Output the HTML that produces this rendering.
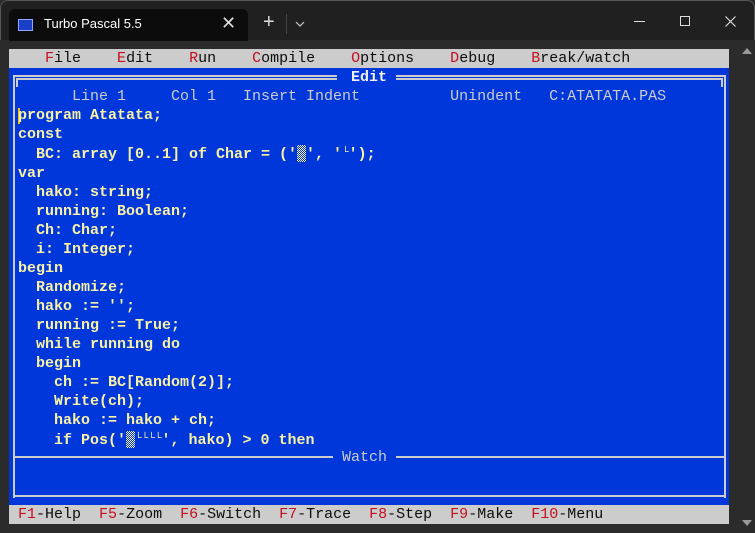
<!DOCTYPE html>
<html><head><meta charset="utf-8"><style>
*{margin:0;padding:0;box-sizing:border-box}
body{width:755px;height:533px;background:#2b2b2b;overflow:hidden;position:relative;font-family:"Liberation Mono","DejaVu Sans Mono",monospace}
.abs{position:absolute}
.row{position:absolute;left:9px;height:19px;line-height:19px;font-size:15px;white-space:pre;font-weight:bold}
.r{color:#c50f1f}
.y{color:#f9f1a5}
.hl{background:#cccccc;position:absolute}
.blk{display:inline-block;width:9px;height:17px;vertical-align:-4px;background:repeating-conic-gradient(#f9f1a5 0 25%,#0037da 0 50%) 0 0/2px 2px}
.sm{font-size:11px;vertical-align:3px}
</style></head><body>
<div class="abs" style="left:0;top:0;width:755px;height:40px;background:#202020;border-radius:8px 8px 0 0;border:1px solid #555;border-bottom:none"></div>
<div class="abs" style="left:9px;top:9px;width:239px;height:32px;background:#0c0c0c;border-radius:6px 6px 0 0"></div>
<div class="abs" style="left:18px;top:19px;width:15px;height:12px;background:#1a40c8;border:1px solid #8fa8ff"></div>
<div class="abs" style="left:44px;top:16px;color:#fff;font:13px 'Liberation Sans',sans-serif">Turbo Pascal 5.5</div>
<div class="abs" style="left:221px;top:13px;color:#ddd;font:18px 'Liberation Sans',sans-serif">✕</div>
<div class="abs" style="left:263px;top:11px;color:#ddd;font:20px 'Liberation Sans',sans-serif">+</div>
<div class="abs" style="left:286px;top:14px;width:1px;height:20px;background:#444"></div>
<svg class="abs" style="left:295px;top:20px" width="10" height="8"><path d="M1 2 L5 6 L9 2" stroke="#ccc" fill="none" stroke-width="1.2"/></svg>
<div class="abs" style="left:634px;top:21px;width:11px;height:1px;background:#ddd"></div>
<div class="abs" style="left:680px;top:16px;width:10px;height:10px;border:1px solid #ddd"></div>
<svg class="abs" style="left:725px;top:16px" width="11" height="11"><path d="M0.5 0.5 L10.5 10.5 M10.5 0.5 L0.5 10.5" stroke="#ddd" stroke-width="1.2"/></svg>
<div class="abs" style="left:742px;top:48px;width:0;height:0;border-left:5px solid transparent;border-right:5px solid transparent;border-bottom:6px solid #999"></div>
<div class="abs" style="left:742px;top:520px;width:0;height:0;border-left:5px solid transparent;border-right:5px solid transparent;border-top:6px solid #999"></div>

<div class="abs" style="left:9px;top:49px;width:720px;height:19px;background:#cccccc"></div>
<div class="abs" style="left:9px;top:68px;width:720px;height:437px;background:#0037da"></div>
<div class="abs" style="left:9px;top:505px;width:720px;height:19px;background:#cccccc"></div>

<div class="hl" style="left:13px;top:75px;width:324px;height:2px"></div>
<div class="hl" style="left:16px;top:78px;width:321px;height:2px"></div>
<div class="hl" style="left:396px;top:75px;width:330px;height:2px"></div>
<div class="hl" style="left:396px;top:78px;width:327px;height:2px"></div>
<div class="hl" style="left:13px;top:75px;width:2px;height:423px"></div>
<div class="hl" style="left:16px;top:78px;width:2px;height:9px"></div>
<div class="hl" style="left:724px;top:75px;width:2px;height:423px"></div>
<div class="hl" style="left:721px;top:78px;width:2px;height:9px"></div>
<div class="hl" style="left:13px;top:456px;width:320px;height:2px"></div>
<div class="hl" style="left:396px;top:456px;width:330px;height:2px"></div>
<div class="hl" style="left:13px;top:495px;width:713px;height:2px"></div>

<div class="row" style="top:49px;color:#0c0c0c;font-weight:normal">    <span class="r">F</span>ile    <span class="r">E</span>dit    <span class="r">R</span>un    <span class="r">C</span>ompile    <span class="r">O</span>ptions    <span class="r">D</span>ebug    <span class="r">B</span>reak/watch</div>
<div class="row" style="top:68px;color:#f2f2f2">                                      Edit</div>
<div class="row" style="top:87px;color:#cccccc;font-weight:normal">       Line 1     Col 1   Insert Indent          Unindent   C:ATATATA.PAS</div>
<div class="abs" style="left:18px;top:108px;width:2px;height:16px;background:#f9c000"></div>
<div class="row y" style="top:106px"> program Atatata;
 const
   BC: array [0..1] of Char = ('<span class="blk"></span>', '<span class="sm">└</span>');
 var
   hako: string;
   running: Boolean;
   Ch: Char;
   i: Integer;
 begin
   Randomize;
   hako := '';
   running := True;
   while running do
   begin
     ch := BC[Random(2)];
     Write(ch);
     hako := hako + ch;
     if Pos('<span class="blk"></span><span class="sm">└└└└</span>', hako) &gt; 0 then</div>
<div class="row" style="top:448px;color:#cccccc;font-weight:normal">                                     Watch</div>
<div class="row" style="top:505px;color:#0c0c0c;font-weight:normal"> <span class="r">F1</span>-Help  <span class="r">F5</span>-Zoom  <span class="r">F6</span>-Switch  <span class="r">F7</span>-Trace  <span class="r">F8</span>-Step  <span class="r">F9</span>-Make  <span class="r">F10</span>-Menu</div>
</body></html>
